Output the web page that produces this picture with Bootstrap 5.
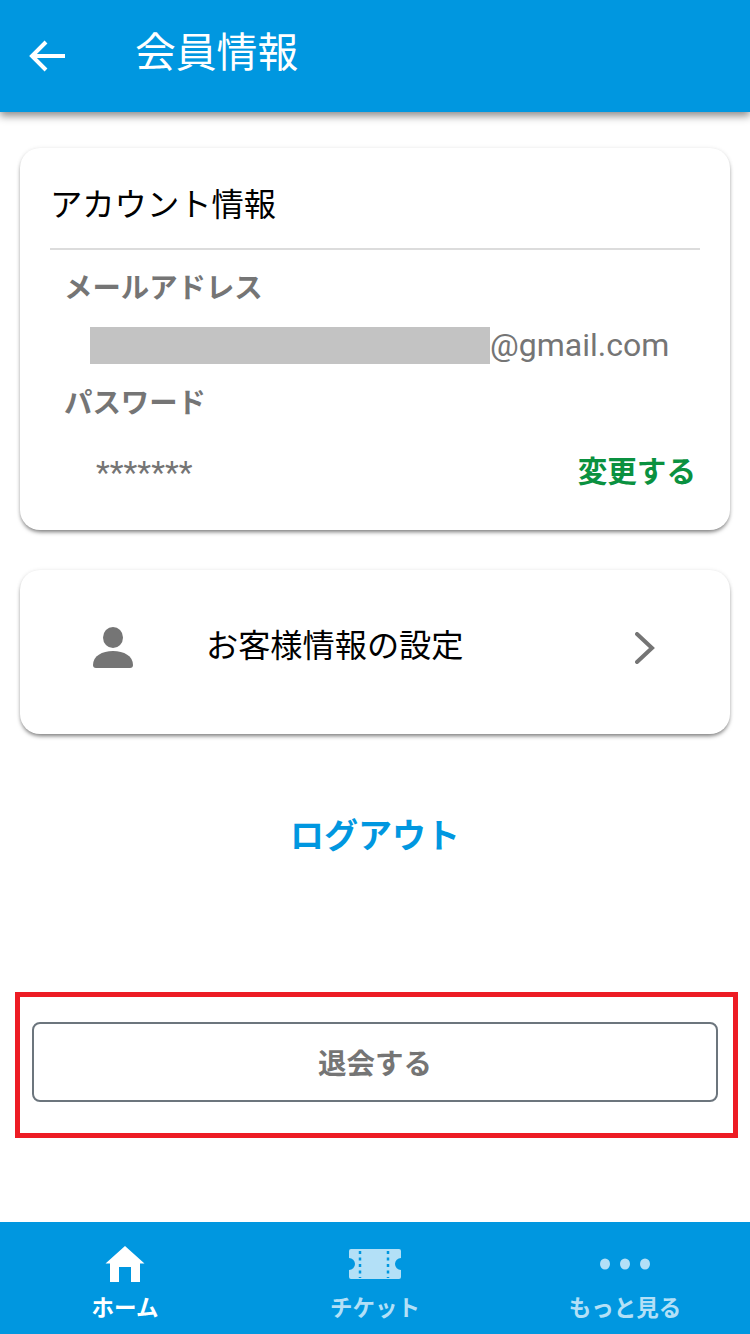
<!DOCTYPE html>
<html lang="ja">

<head>
    <meta charset="UTF-8">
    <title>会員情報</title>
    <link href="https://cdn.jsdelivr.net/npm/bootstrap@5.3.0/dist/css/bootstrap.min.css" rel="stylesheet">
    <style>
        body {
            height: 1334px;
            overflow: hidden;
            background-color: #fff;
            font-family: Roboto, "Noto Sans CJK JP", sans-serif;
            color: #000;
        }

        .app-head {
            height: 112px;
            padding-left: 28px;
            background-color: #0097e0;
            color: #fff;
            box-shadow: 0 4px 8px rgba(0, 0, 0, 0.45);
        }

        .app-title {
            margin: 0 0 6px 69px;
            font-size: 40.800px;
            font-weight: 400;
        }

        .info-card {
            border-radius: 20px;
            background-color: #fff;
            box-shadow: 0 3px 4px -1px rgba(0, 0, 0, 0.5), 0 0 4px rgba(0, 0, 0, 0.08);
        }

        .account-card {
            height: 382px;
            margin: 36px 20px 0;
            padding: 30px 30px 0;
        }

        .account-title {
            height: 72px;
            margin: 0;
            border-bottom: 2px solid #dcdcdc;
            font-size: 32.300px;
            font-weight: 400;
            line-height: 54px;
        }

        .field-label {
            padding-left: 14px;
            color: #757575;
            font-size: 28.400px;
            font-weight: 700;
            line-height: 40px;
        }

        .mail-label {
            margin-top: 19px;
        }

        .mail-row {
            height: 37px;
            margin-top: 18px;
            padding-left: 40px;
            color: #757575;
            font-size: 32px;
            line-height: 37px;
        }

        .mail-mask {
            width: 400px;
            height: 37px;
            background-color: #c3c3c3;
        }

        .pass-label {
            margin-top: 20px;
        }

        .pass-row {
            margin-top: 28px;
            padding: 0 4px 0 46px;
            color: #757575;
            font-size: 32px;
            line-height: 40px;
        }

        .change-link {
            color: #0a9140;
            font-size: 29.600px;
            font-weight: 700;
        }

        .profile-card {
            height: 164px;
            margin: 40px 20px 0;
            padding: 0 75px 8px 73px;
            font-size: 32.200px;
        }

        .profile-name {
            margin-left: 73px;
            padding-bottom: 4px;
        }

        .logout-link {
            margin-top: 77px;
            color: #0097e0;
            font-size: 34px;
            font-weight: 700;
            line-height: 50px;
        }

        .quit-box {
            height: 146px;
            margin: 131px 12px 0 15px;
            padding: 25px 15px 25px 12px;
            border: 5px solid #ed1c24;
        }

        .quit-btn {
            height: 80px;
            padding-top: 8px;
            border: 2px solid #6c757d;
            border-radius: 8px;
            background-color: #fff;
            color: #757575;
            font-size: 28.500px;
            font-weight: 700;
        }

        .app-foot {
            height: 112px;
            margin-top: 84px;
            padding-top: 24px;
            background-color: #0097e0;
            color: #b3e0f7;
            font-size: 22.500px;
            font-weight: 700;
        }

        .foot-icon {
            height: 46px;
        }

        .foot-ticket {
            margin-top: 3px;
        }

        .foot-dots {
            margin-top: 12px;
        }

        .foot-on {
            color: #fff;
        }
    </style>
</head>

<body>
    <header class="app-head d-flex align-items-center">
        <svg width="38" height="34" viewBox="0 0 38 34" fill="none" stroke="#fff" stroke-width="4">
            <path d="M37 17H4M18 3L4 17l14 14" />
        </svg>
        <h1 class="app-title">会員情報</h1>
    </header>

    <section class="info-card account-card">
        <h2 class="account-title">アカウント情報</h2>
        <div class="field-label mail-label">メールアドレス</div>
        <div class="mail-row d-flex">
            <div class="mail-mask"></div>
            <span>@gmail.com</span>
        </div>
        <div class="field-label pass-label">パスワード</div>
        <div class="pass-row d-flex justify-content-between">
            <span>*******</span>
            <span class="change-link">変更する</span>
        </div>
    </section>

    <section class="info-card profile-card d-flex align-items-center">
        <svg width="40" height="42" viewBox="0 0 40 42" fill="#757575">
            <ellipse cx="20" cy="10.500" rx="10" ry="10.500" />
            <path d="M0 38C0 29 9 24 20 24s20 5 20 14c0 2-1 3-3 3H3c-2 0-3-1-3-3z" />
        </svg>
        <span class="profile-name flex-grow-1">お客様情報の設定</span>
        <svg width="20" height="32" viewBox="0 0 20 32" fill="none" stroke="#757575" stroke-width="4" stroke-linecap="round">
            <path d="M2 2l15 14L2 30" />
        </svg>
    </section>

    <div class="logout-link text-center">ログアウト</div>

    <div class="quit-box">
        <button type="button" class="quit-btn w-100">退会する</button>
    </div>

    <nav class="app-foot row g-0 text-center">
        <div class="col-4 foot-on">
            <div class="foot-icon d-flex justify-content-center align-items-start">
                <svg width="40" height="36" viewBox="0 0 40 36" fill="#fff">
                    <path d="M20 0L39.500 17.500H35V36H26V21H14V36H5V17.500H.5z" />
                </svg>
            </div>
            <div>ホーム</div>
        </div>
        <div class="col-4">
            <div class="foot-icon d-flex justify-content-center align-items-start">
                <svg width="52" height="30" viewBox="0 0 52 30" class="foot-ticket">
                    <path fill="#b3e0f7" d="M2 0H50a2 2 0 0 1 2 2V9a6 6 0 0 0 0 12v7a2 2 0 0 1-2 2H2a2 2 0 0 1-2-2V21A6 6 0 0 0 0 9V2A2 2 0 0 1 2 0z" />
                    <path stroke="#0097e0" stroke-width="2.500" stroke-dasharray="3 3.500" d="M11 2V29M39 2V29" />
                </svg>
            </div>
            <div>チケット</div>
        </div>
        <div class="col-4">
            <div class="foot-icon d-flex justify-content-center align-items-start">
                <svg width="50" height="12" viewBox="0 0 50 12" fill="#b3e0f7" class="foot-dots">
                    <ellipse cx="5" cy="6" rx="5" ry="5.500" />
                    <ellipse cx="25" cy="6" rx="5" ry="5.500" />
                    <ellipse cx="45" cy="6" rx="5" ry="5.500" />
                </svg>
            </div>
            <div>もっと見る</div>
        </div>
    </nav>

    <script src="https://cdn.jsdelivr.net/npm/bootstrap@5.3.0/dist/js/bootstrap.bundle.min.js"></script>
</body>

</html>
